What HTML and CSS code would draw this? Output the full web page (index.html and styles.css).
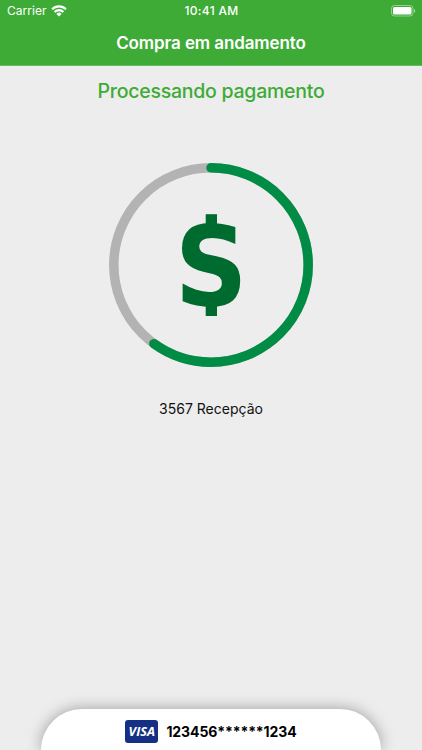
FILE: index.html
```html
<!DOCTYPE html>
<html lang="pt-BR">
<head>
<meta charset="utf-8">
<title>Compra em andamento</title>
<link rel="stylesheet" href="styles.css">
</head>
<body>
<div class="screen">
  <header class="header">
    <div class="status">
      <div class="carrier">
        <span class="carrier-name">Carrier</span>
        <svg class="wifi" viewBox="0 0 16 12" width="16" height="12">
          <path d="M1.1 4.3a9.8 9.8 0 0 1 13.8 0M3.6 6.9a6.2 6.2 0 0 1 8.8 0" fill="none" stroke="#fff" stroke-width="2.2"/>
          <path d="M8 11.4L5.4 8.9a3.7 3.7 0 0 1 5.2 0z" fill="#fff"/>
        </svg>
      </div>
      <span class="time">10:41 AM</span>
      <svg class="battery" viewBox="0 0 25 12" width="25" height="12">
        <rect x=".5" y=".5" width="21.5" height="10.5" rx="3" fill="none" stroke="#fff" stroke-opacity=".45"/>
        <rect x="2" y="2" width="18.5" height="7.5" rx="1.5" fill="#fff"/>
        <path d="M23 4v3.8q1.3-.5 1.3-1.9T23 4z" fill="#fff" fill-opacity=".5"/>
      </svg>
    </div>
    <h1 class="title"><span>Compra em andamento</span></h1>
  </header>
  <main class="content">
    <h2 class="heading">Processando pagamento</h2>
    <svg class="progress" viewBox="0 0 206 206" width="206" height="206">
      <circle cx="103" cy="103" r="97.2" fill="none" stroke="#b3b3b3" stroke-width="9.5"/>
      <circle cx="103" cy="103" r="97.2" fill="none" stroke="#008c45" stroke-width="9.5" stroke-linecap="round" pathLength="100" stroke-dasharray="60 100" transform="rotate(-90 103 103)"/>
      <rect x="97.7" y="52.2" width="11.3" height="16" fill="#006b2e"/>
      <rect x="97.7" y="138" width="11.3" height="16" fill="#006b2e"/>
      <text class="currency" transform="translate(66.7 143) scale(.92 1)">S</text>
    </svg>
    <p class="place">3567 Recepção</p>
  </main>
  <footer class="card">
    <svg class="visa" viewBox="0 0 33 23" width="33" height="23">
      <rect width="33" height="23" rx="3" fill="#152f84"/>
      <text class="visa-name" x="3.6" y="16.2" textLength="26.5" lengthAdjust="spacingAndGlyphs">VISA</text>
    </svg>
    <span class="number">123456******1234</span>
  </footer>
</div>
</body>
</html>
```
FILE: styles.css
```css
* { box-sizing: border-box; }
body {
  margin: 0;
  font-family: Inter, "Liberation Sans", sans-serif;
}
.screen {
  width: 422px;
  height: 750px;
  display: flex;
  flex-direction: column;
  align-items: center;
  overflow: hidden;
  background: #ededed;
}
.header {
  width: 100%;
  height: 66px;
  background: #3dab35;
  border-bottom: 1px solid #67ba61;
  color: #fff;
}
.status {
  display: grid;
  grid-template-columns: 1fr auto 1fr;
  align-items: center;
  height: 21px;
  padding: 0 6px 0 7px;
}
.carrier { display: flex; align-items: center; gap: 4px; }
.carrier-name { font-size: 12px; letter-spacing: .05px; }
.time { font-size: 12px; font-weight: 500; letter-spacing: .3px; }
.battery { justify-self: end; }
.title {
  margin: 0;
  height: 44px;
  line-height: 44px;
  text-align: center;
  font-size: 17px;
  font-weight: 600;
  letter-spacing: -.1px;
}
.content {
  flex: 1;
  display: flex;
  flex-direction: column;
  align-items: center;
}
.heading {
  margin: 13px 0 58px;
  line-height: 25px;
  font-size: 19.5px;
  font-weight: 500;
  letter-spacing: -.25px;
  color: #3dab35;
}
.currency {
  font-family: "DejaVu Sans", sans-serif;
  font-size: 110px;
  font-weight: 700;
  fill: #006b2e;
}
.place {
  margin: 31px 0 0;
  line-height: 20px;
  font-size: 14px;
  color: #111;
}
.card {
  width: 340px;
  height: 41px;
  display: flex;
  justify-content: center;
  align-items: center;
  gap: 8px;
  padding-top: 3px;
  border-radius: 41px 41px 0 0;
  background: #fff;
  box-shadow: 0 0 15px rgba(0, 0, 0, .35);
}
.visa-name {
  font-family: "Open Sans", sans-serif;
  font-size: 13px;
  font-weight: 700;
  font-style: italic;
  fill: #fff;
}
.number {
  font-size: 14px;
  font-weight: 700;
  letter-spacing: -.1px;
  color: #000;
}
```
